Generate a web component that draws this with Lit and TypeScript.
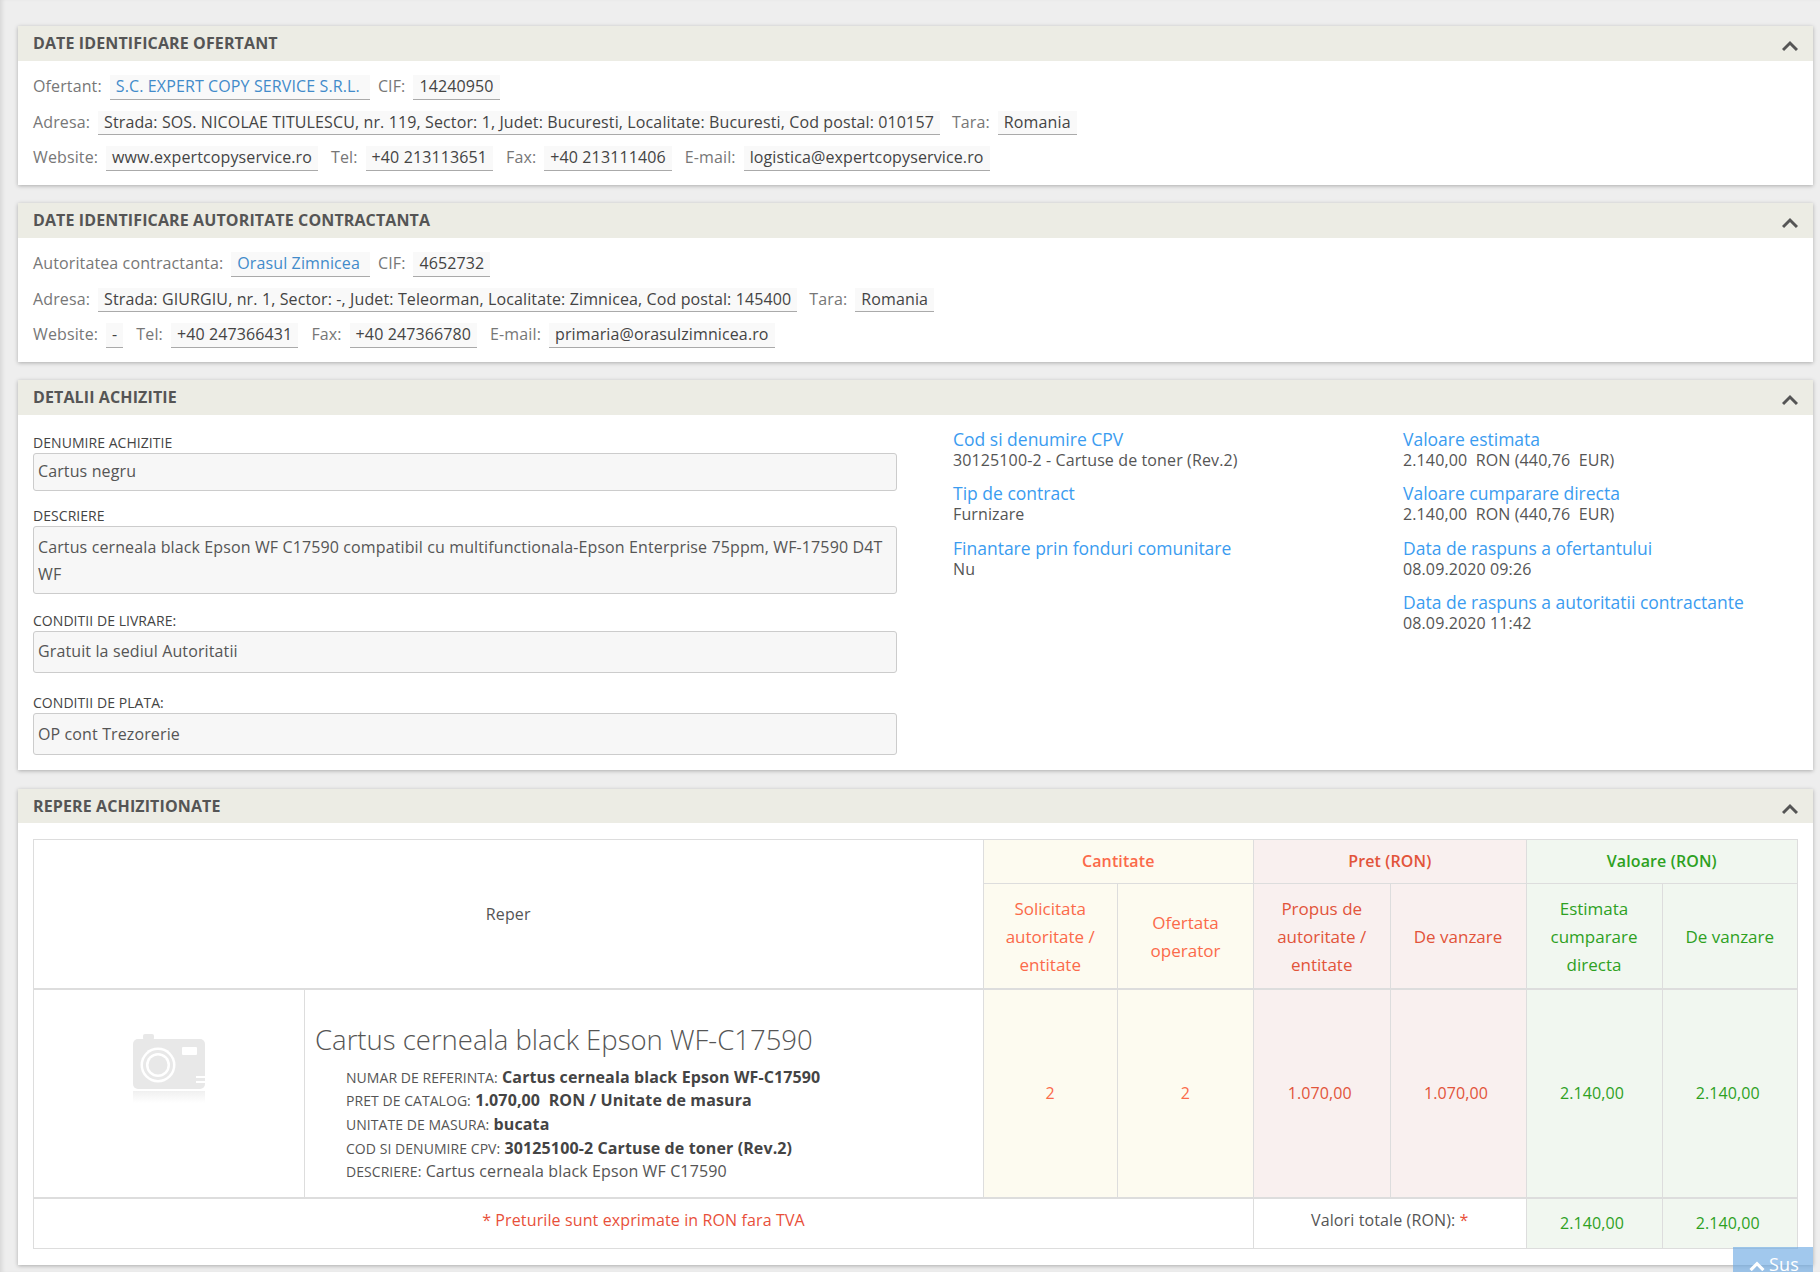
import { LitElement, html, css, svg } from 'lit';
import { customElement } from 'lit/decorators.js';

type Field = { label: string; value: string; link?: boolean };

const chevron = svg`<path d="M1 10 L8 3 L15 10" fill="none" stroke="#555" stroke-width="3"/>`;

const ofertant: Field[][] = [
  [
    { label: 'Ofertant:', value: 'S.C. EXPERT COPY SERVICE S.R.L.', link: true },
    { label: 'CIF:', value: '14240950' },
  ],
  [
    { label: 'Adresa:', value: 'Strada: SOS. NICOLAE TITULESCU, nr. 119, Sector: 1, Judet: Bucuresti, Localitate: Bucuresti, Cod postal: 010157' },
    { label: 'Tara:', value: 'Romania' },
  ],
  [
    { label: 'Website:', value: 'www.expertcopyservice.ro' },
    { label: 'Tel:', value: '+40 213113651' },
    { label: 'Fax:', value: '+40 213111406' },
    { label: 'E-mail:', value: 'logistica@expertcopyservice.ro' },
  ],
];

const autoritate: Field[][] = [
  [
    { label: 'Autoritatea contractanta:', value: 'Orasul Zimnicea', link: true },
    { label: 'CIF:', value: '4652732' },
  ],
  [
    { label: 'Adresa:', value: 'Strada: GIURGIU, nr. 1, Sector: -, Judet: Teleorman, Localitate: Zimnicea, Cod postal: 145400' },
    { label: 'Tara:', value: 'Romania' },
  ],
  [
    { label: 'Website:', value: '-' },
    { label: 'Tel:', value: '+40 247366431' },
    { label: 'Fax:', value: '+40 247366780' },
    { label: 'E-mail:', value: 'primaria@orasulzimnicea.ro' },
  ],
];

const boxes = [
  { label: 'DENUMIRE ACHIZITIE', value: 'Cartus negru', cls: 'b1' },
  { label: 'DESCRIERE', value: 'Cartus cerneala black Epson WF C17590 compatibil cu multifunctionala-Epson Enterprise 75ppm, WF-17590 D4T WF', cls: 'b2' },
  { label: 'CONDITII DE LIVRARE:', value: 'Gratuit la sediul Autoritatii', cls: 'b3' },
  { label: 'CONDITII DE PLATA:', value: 'OP cont Trezorerie', cls: 'b3' },
];

const infoA = [
  ['Cod si denumire CPV', '30125100-2 - Cartuse de toner (Rev.2)'],
  ['Tip de contract', 'Furnizare'],
  ['Finantare prin fonduri comunitare', 'Nu'],
];

const infoB = [
  ['Valoare estimata', '2.140,00\u00a0 RON (440,76\u00a0 EUR)'],
  ['Valoare cumparare directa', '2.140,00\u00a0 RON (440,76\u00a0 EUR)'],
  ['Data de raspuns a ofertantului', '08.09.2020 09:26'],
  ['Data de raspuns a autoritatii contractante', '08.09.2020 11:42'],
];

@customElement('app-root')
export class AppRoot extends LitElement {
  static styles = css`
    :host {
      display: block;
      position: relative;
      height: 1272px;
      overflow: hidden;
      background: #eeeeee;
      box-shadow: inset 4px 0 4px -2px rgba(0, 0, 0, 0.1);
      font-family: 'Open Sans', sans-serif;
      font-size: 16px;
      letter-spacing: 0.12px;
      color: #444;
    }
    .page {
      display: flex;
      flex-direction: column;
      gap: 18.5px;
      padding: 26px 7px 0 18px;
    }
    .card {
      background: #fff;
      box-shadow: 0 1px 4px rgba(0, 0, 0, 0.28);
    }
    .head {
      display: flex;
      align-items: center;
      justify-content: space-between;
      height: 34.5px;
      padding: 0 15px;
      background: #ecece4;
      font-size: 16px;
      font-weight: 700;
      color: #555;
    }
    .head svg {
      width: 16px;
      height: 12px;
      margin: 6px 0 0;
    }
    .rows {
      display: flex;
      flex-direction: column;
      gap: 11px;
      padding: 14.5px 15px 14px;
    }
    .row {
      display: flex;
      gap: 8px;
      line-height: 23.5px;
    }
    .row + .row .val + .lbl {
      margin-left: 4px;
    }
    .row:last-child .val + .lbl {
      margin-left: 5px;
    }
    .lbl {
      color: #777;
    }
    .val {
      padding: 0 6px;
      background: #f9f9f9;
      border-bottom: 1px solid #aaa;
      color: #444;
      white-space: nowrap;
    }
    .val.link {
      padding-right: 10px;
      color: #428bca;
    }
    .details {
      display: flex;
      height: 355.5px;
      padding: 0 15px;
    }
    .left {
      flex: none;
      width: 864px;
      padding-top: 18.5px;
    }
    .field-label {
      font-size: 14px;
      line-height: 20px;
      letter-spacing: 0.05px;
      color: #444;
    }
    .box {
      box-sizing: border-box;
      padding: 0 4px;
      background: #f7f7f7;
      border: 1px solid #ccc;
      border-radius: 3px;
      color: #555;
    }
    .box.b1 {
      height: 38px;
      margin-bottom: 15px;
      line-height: 34px;
    }
    .box.b2 {
      height: 68px;
      margin-bottom: 17px;
      padding-top: 7px;
      line-height: 27px;
    }
    .box.b3 {
      height: 42px;
      margin-bottom: 20px;
      line-height: 38px;
    }
    .box.b3:last-child {
      line-height: 40px;
    }
    .info {
      flex: none;
      width: 450px;
      padding-top: 14px;
      display: flex;
      flex-direction: column;
      gap: 13.5px;
    }
    .info.one {
      margin-left: 56px;
    }
    .info.two {
      flex: 1;
      width: auto;
    }
    .info-title {
      font-size: 17.5px;
      line-height: 21px;
      letter-spacing: 0;
      color: #3b9cf0;
    }
    .info-val {
      line-height: 20px;
      color: #555;
    }
    .wrap {
      padding: 15.5px 15px 16px;
    }
    table {
      width: 100%;
      table-layout: fixed;
      border-collapse: collapse;
      text-align: center;
    }
    th,
    td {
      border: 1px solid #ddd;
      padding: 0 8px;
      font-weight: 400;
      line-height: 28px;
      vertical-align: middle;
      color: #555;
    }
    th.strong {
      font-weight: 600;
      height: 43px;
    }
    th.sub {
      padding-top: 2px;
      font-size: 17px;
      letter-spacing: 0;
    }
    .tall {
      height: 102px;
    }
    .divider {
      border-top-width: 2px;
    }
    th.y,
    td.y {
      background: #fdfbf0;
      color: #fb6a4a;
    }
    th.r,
    td.r {
      background: #f9f0ef;
      color: #e2543a;
    }
    th.g,
    td.g {
      background: #f1f7f0;
      color: #2ea11f;
    }
    td.num {
      padding-right: 12px;
    }
    .body-row {
      height: 209px;
    }
    td.pic {
      padding: 44px 0 0;
      vertical-align: top;
    }
    .pic svg {
      display: block;
      margin: 0 auto;
      filter: blur(0.4px);
    }
    td.desc {
      padding: 0 10px;
      text-align: left;
      vertical-align: top;
    }
    .desc h3 {
      margin: 32px 0 8px;
      font-size: 27.5px;
      font-weight: 300;
      line-height: 36px;
      letter-spacing: 0;
      color: #555;
    }
    .spec {
      margin: 0 0 0 31px;
      padding: 0;
      list-style: none;
      line-height: 23.7px;
    }
    .spec span {
      font-size: 14px;
      letter-spacing: 0.05px;
    }
    .spec b {
      font-weight: 700;
      color: #444;
    }
    td.note {
      color: #e8503a;
      padding-bottom: 6px;
    }
    .foot {
      height: 51px;
    }
    .total {
      padding-bottom: 6px;
    }
    .star {
      color: #e8503a;
    }
    .up {
      position: absolute;
      right: 7px;
      top: 1247px;
      width: 80px;
      height: 25px;
      padding: 2px 0 0 2px;
      box-sizing: border-box;
      text-align: center;
      background: rgba(110, 170, 228, 0.65);
      font-size: 18px;
      color: #fff;
      line-height: 31px;
    }
    .up svg {
      width: 16px;
      height: 11px;
      margin-right: 4px;
    }
  `;

  renderRows(rows: Field[][]) {
    return html`<div class="rows">
      ${rows.map(
        row => html`<div class="row">
          ${row.map(
            f => html`<span class="lbl">${f.label}</span>
              <span class="val ${f.link ? 'link' : ''}">${f.value}</span>`
          )}
        </div>`
      )}
    </div>`;
  }

  renderHead(title: string) {
    return html`<div class="head">
      <span>${title}</span>
      <svg viewBox="0 0 16 12">${chevron}</svg>
    </div>`;
  }

  renderInfo(items: string[][], cls: string) {
    return html`<div class="info ${cls}">
      ${items.map(
        i => html`<div>
          <div class="info-title">${i[0]}</div>
          <div class="info-val">${i[1]}</div>
        </div>`
      )}
    </div>`;
  }

  render() {
    return html`
      <div class="page">
        <section class="card">
          ${this.renderHead('DATE IDENTIFICARE OFERTANT')} ${this.renderRows(ofertant)}
        </section>
        <section class="card">
          ${this.renderHead('DATE IDENTIFICARE AUTORITATE CONTRACTANTA')} ${this.renderRows(autoritate)}
        </section>
        <section class="card">
          ${this.renderHead('DETALII ACHIZITIE')}
          <div class="details">
            <div class="left">
              ${boxes.map(
                b => html`<div class="field-label">${b.label}</div>
                  <div class="box ${b.cls}">${b.value}</div>`
              )}
            </div>
            ${this.renderInfo(infoA, 'one')} ${this.renderInfo(infoB, 'two')}
          </div>
        </section>
        <section class="card">
          ${this.renderHead('REPERE ACHIZITIONATE')}
          <div class="wrap">
            <table>
              <colgroup>
                <col style="width:271px" />
                <col style="width:678.5px" />
                <col style="width:134.5px" />
                <col style="width:136px" />
                <col style="width:136.5px" />
                <col style="width:136px" />
                <col style="width:136px" />
                <col />
              </colgroup>
              <tr>
                <th colspan="2" rowspan="2">Reper</th>
                <th colspan="2" class="y strong">Cantitate</th>
                <th colspan="2" class="r strong">Pret (RON)</th>
                <th colspan="2" class="g strong">Valoare (RON)</th>
              </tr>
              <tr>
                <th class="y sub tall">Solicitata<br />autoritate /<br />entitate</th>
                <th class="y sub">Ofertata<br />operator</th>
                <th class="r sub">Propus de<br />autoritate /<br />entitate</th>
                <th class="r sub">De vanzare</th>
                <th class="g sub">Estimata<br />cumparare<br />directa</th>
                <th class="g sub">De vanzare</th>
              </tr>
              <tr class="body-row">
                <td class="pic divider">${this.renderCamera()}</td>
                <td class="desc divider">
                  <h3>Cartus cerneala black Epson WF-C17590</h3>
                  <ul class="spec">
                    <li><span>NUMAR DE REFERINTA:</span> <b>Cartus cerneala black Epson WF-C17590</b></li>
                    <li><span>PRET DE CATALOG:</span> <b>1.070,00&nbsp; RON / Unitate de masura</b></li>
                    <li><span>UNITATE DE MASURA:</span> <b>bucata</b></li>
                    <li><span>COD SI DENUMIRE CPV:</span> <b>30125100-2 Cartuse de toner (Rev.2)</b></li>
                    <li><span>DESCRIERE:</span> Cartus cerneala black Epson WF C17590</li>
                  </ul>
                </td>
                <td class="y divider">2</td>
                <td class="y divider">2</td>
                <td class="r divider num">1.070,00</td>
                <td class="r divider num">1.070,00</td>
                <td class="g divider num">2.140,00</td>
                <td class="g divider num">2.140,00</td>
              </tr>
              <tr class="foot">
                <td colspan="4" class="note divider">* Preturile sunt exprimate in RON fara TVA</td>
                <td colspan="2" class="total divider">Valori totale (RON): <span class="star">*</span></td>
                <td class="g divider num">2.140,00</td>
                <td class="g divider num">2.140,00</td>
              </tr>
            </table>
          </div>
        </section>
      </div>
      <div class="up">
        <svg viewBox="0 0 16 12"><path d="M1 11 L8 4 L15 11" fill="none" stroke="#fff" stroke-width="3.5" /></svg>Sus
      </div>
    `;
  }

  renderCamera() {
    return html`<svg width="72" height="76" viewBox="0 0 72 76">
      <defs>
        <linearGradient id="fade" x1="0" y1="0" x2="0" y2="1">
          <stop offset="0" stop-color="#f0f0f0" />
          <stop offset="1" stop-color="#ffffff" />
        </linearGradient>
      </defs>
      <rect x="10" y="0" width="11" height="6" rx="2" fill="#e8e8e8" />
      <rect x="0" y="5" width="72" height="50" rx="5" fill="#e8e8e8" />
      <circle cx="25" cy="31" r="17.5" fill="#fff" />
      <circle cx="25" cy="31" r="15" fill="#e8e8e8" />
      <circle cx="25" cy="31" r="12" fill="#fff" />
      <circle cx="25" cy="31" r="9.5" fill="#e8e8e8" />
      <rect x="49" y="13" width="15" height="8" rx="1" fill="#fff" />
      <rect x="63" y="42" width="9" height="2" fill="#fff" />
      <rect x="63" y="47" width="9" height="2" fill="#fff" />
      <rect x="0" y="57" width="72" height="12" fill="url(#fade)" />
    </svg>`;
  }
}
